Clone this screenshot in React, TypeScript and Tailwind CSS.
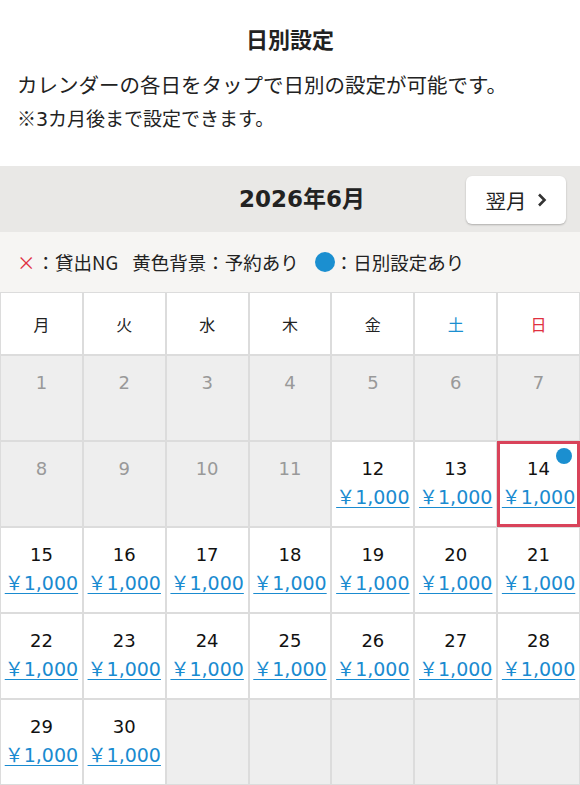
import React from "react";

const font = { fontFamily: '"DejaVu Sans", "Noto Sans CJK JP", sans-serif' };
const cjk = { fontFamily: '"Noto Sans CJK JP", sans-serif' };

type Cell = { day?: number; disabled?: boolean; price?: boolean; selected?: boolean; dot?: boolean };

const cells: Cell[] = [];
for (let d = 1; d <= 11; d++) cells.push({ day: d, disabled: true });
for (let d = 12; d <= 30; d++) cells.push({ day: d, price: true, selected: d === 14, dot: d === 14 });
for (let i = 0; i < 5; i++) cells.push({ disabled: true });

const weekdays = [
  { t: "月", c: "text-[#222]" },
  { t: "火", c: "text-[#222]" },
  { t: "水", c: "text-[#222]" },
  { t: "木", c: "text-[#222]" },
  { t: "金", c: "text-[#222]" },
  { t: "土", c: "text-[#1b8fd0]" },
  { t: "日", c: "text-[#e0303f]" },
];

export default function App() {
  return (
    <div style={font} className="w-[580px] h-[785px] overflow-hidden bg-white text-[#222]">
      <div className="h-[166px] px-[17px] pt-[22px]">
        <h1 style={cjk} className="text-center text-[22px] font-bold leading-[32px]">日別設定</h1>
        <p style={cjk} className="mt-[15px] text-[20.5px] leading-[30px]">カレンダーの各日をタップで日別の設定が可能です。</p>
        <p className="mt-[6px] text-[19px] leading-[26px]"><span style={cjk}>※</span>3<span style={cjk}>カ月後まで設定できます。</span></p>
      </div>
      <div className="h-[66px] bg-[#e9e8e6] flex items-center relative">
        <div className="flex-1 text-center pl-[24px] text-[23px] font-bold leading-[30px]">2026年6月</div>
        <button style={cjk} className="absolute right-[14px] top-[10px] w-[100px] h-[48px] bg-white rounded-[6px] shadow-[0_1px_2px_rgba(0,0,0,0.25)] flex items-center justify-center gap-[10px] text-[20.5px]">
          <span>翌月</span>
          <svg width="10" height="14" viewBox="0 0 10 14"><path d="M2 1.5 L7.5 7 L2 12.5" stroke="#333" strokeWidth="2.6" fill="none" /></svg>
        </button>
      </div>
      <div style={cjk} className="h-[60px] bg-[#f6f5f3] flex items-center px-[17px] text-[18.5px] leading-[24px]">
        <span className="text-[#e0303f] mr-[1px]">×</span>
        <span>：貸出NG</span>
        <span className="ml-[14px]">黄色背景：予約あり</span>
        <span className="ml-[16px] inline-block w-[20px] h-[20px] rounded-full bg-[#1b8fd0]"></span>
        <span>：日別設定あり</span>
      </div>
      <div className="grid grid-cols-7 gap-[2px] bg-[#dcdcdc] px-[1px] py-[1px]">
        {weekdays.map((w) => (
          <div key={w.t} style={cjk} className={`bg-white h-[61px] flex items-center justify-center text-[16px] ${w.c}`}>{w.t}</div>
        ))}
        {cells.map((c, i) => (
          <div
            key={i}
            className={`relative h-[84px] flex flex-col items-center pt-[12px] ${c.disabled ? "bg-[#eeeeee]" : "bg-white"}`}
          >
            {c.selected && <div className="absolute -inset-[1px] border-[3px] border-[#d9435a]"></div>}
            {c.dot && <div className="absolute right-[7px] top-[6px] w-[16px] h-[16px] rounded-full bg-[#1b8fd0]"></div>}
            {c.day && (
              <div className={`text-[18px] leading-[30px] ${c.disabled ? "text-[#999]" : "text-[#111]"}`}>{c.day}</div>
            )}
            {c.price && (
              <div className="text-[19px] leading-[26px] text-[#1a8bd0] underline underline-offset-[3px] decoration-[1px]">￥1,000</div>
            )}
          </div>
        ))}
      </div>
    </div>
  );
}
